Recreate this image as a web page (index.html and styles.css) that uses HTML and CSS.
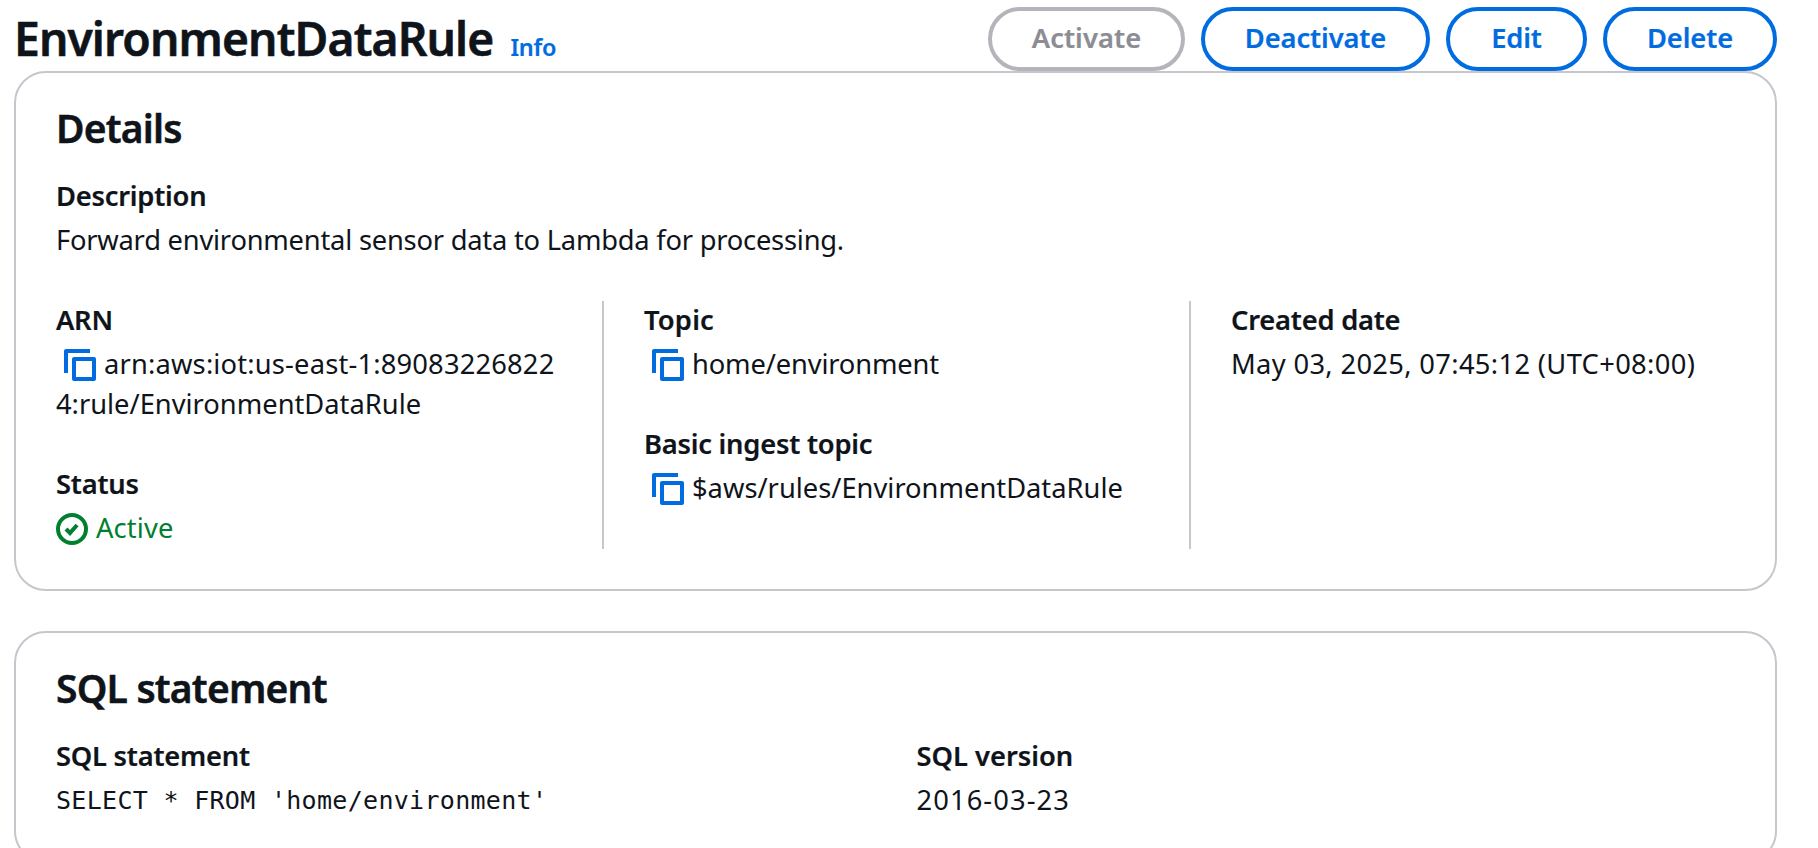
FILE: index.html
```html
<!DOCTYPE html>
<html lang="en">
<head>
<meta charset="utf-8">
<title>EnvironmentDataRule</title>
<link rel="stylesheet" href="styles.css">
</head>
<body>
<header class="page-header">
  <div class="heading">
    <h1 class="title">EnvironmentDataRule</h1>
    <a class="info">Info</a>
  </div>
  <div class="actions">
    <button class="btn btn-activate" disabled>Activate</button>
    <button class="btn btn-deactivate">Deactivate</button>
    <button class="btn btn-edit">Edit</button>
    <button class="btn btn-delete">Delete</button>
  </div>
</header>
<main class="content">
  <section class="card">
    <h2 class="card-title">Details</h2>
    <div class="field">
      <div class="label">Description</div>
      <div class="value">Forward environmental sensor data to Lambda for processing.</div>
    </div>
    <div class="columns">
      <div class="column">
        <div class="field">
          <div class="label">ARN</div>
          <div class="value arn"><svg class="icon copy" viewBox="0 0 16 16"><path d="M1 12V1h12"/><path d="M15 5H5v10h10V5Z"/></svg><span class="account">arn:aws:iot:us-east-1:89083226822</span><span class="resource">4:rule/EnvironmentDataRule</span></div>
        </div>
        <div class="field">
          <div class="label">Status</div>
          <div class="value status"><svg class="icon check" viewBox="0 0 16 16"><circle cx="8" cy="8" r="7"/><path d="m5 8 2 2 3.521-4"/></svg>Active</div>
        </div>
      </div>
      <div class="column">
        <div class="field">
          <div class="label topic-label">Topic</div>
          <div class="value topic"><svg class="icon copy" viewBox="0 0 16 16"><path d="M1 12V1h12"/><path d="M15 5H5v10h10V5Z"/></svg>home/environment</div>
        </div>
        <div class="field">
          <div class="label">Basic ingest topic</div>
          <div class="value ingest"><svg class="icon copy" viewBox="0 0 16 16"><path d="M1 12V1h12"/><path d="M15 5H5v10h10V5Z"/></svg>$aws/rules/EnvironmentDataRule</div>
        </div>
      </div>
      <div class="column">
        <div class="field">
          <div class="label">Created date</div>
          <div class="value date">May 03, 2025, 07:45:12 (UTC+08:00)</div>
        </div>
      </div>
    </div>
  </section>
  <section class="card">
    <h2 class="card-title">SQL statement</h2>
    <div class="halves">
      <div class="field">
        <div class="label">SQL statement</div>
        <div class="value code">SELECT * FROM 'home/environment'</div>
      </div>
      <div class="field version-field">
        <div class="label version-label">SQL version</div>
        <div class="value version">2016-03-23</div>
      </div>
    </div>
  </section>
</main>
</body>
</html>
```

FILE: styles.css
```css
* { box-sizing: border-box; }

body {
  margin: 0;
  height: 848px;
  overflow: hidden;
  padding: 7px 41px 0 14px;
  background: #fff;
  color: #0f141a;
  font-family: "Noto Sans", "Open Sans", sans-serif;
  font-size: 27.3px;
  line-height: 40px;
  letter-spacing: -0.22px;
}

.page-header {
  display: flex;
  justify-content: space-between;
  height: 64px;
}

.heading {
  display: flex;
  align-items: baseline;
  gap: 17px;
}

.title {
  margin: 0;
  font-size: 46.2px;
  font-weight: 600;
  line-height: 64px;
  letter-spacing: -0.88px;
  -webkit-text-stroke: 0.6px;
}

.info {
  color: #006ce0;
  font-size: 23.4px;
  font-weight: 600;
  -webkit-text-stroke: 0.2px;
}

.actions {
  display: flex;
  gap: 16px;
}

.btn {
  height: 64px;
  padding: 0 0 2px;
  border: 4px solid #006ce0;
  border-radius: 32px;
  background: #fff;
  color: #006ce0;
  font: 600 27.3px/40px "Noto Sans", "Open Sans", sans-serif;
  letter-spacing: -0.1px;
  -webkit-text-stroke: 0.2px;
}

.btn:disabled {
  border-color: #b4b4bb;
  color: #8c8c94;
}

.btn-activate { width: 197px; letter-spacing: 0.1px; }
.btn-deactivate { width: 229px; }
.btn-edit { width: 141px; }
.btn-delete { width: 174px; }

.content {
  display: flex;
  flex-direction: column;
  gap: 40px;
}

.card {
  flex: none;
  padding: 31px 40px 40px;
  border: 2px solid #c6c6cd;
  border-radius: 32px;
}

.card-title {
  margin: 0 0 24px;
  font-size: 39px;
  font-weight: 600;
  line-height: 48px;
  letter-spacing: -0.8px;
  -webkit-text-stroke: 0.5px;
}

.field {
  display: flex;
  flex-direction: column;
  gap: 4px;
}

.label {
  font-weight: 600;
  -webkit-text-stroke: 0.2px;
}

.columns {
  display: grid;
  grid-template-columns: 546px 587px 1fr;
  margin-top: 41px;
}

.column {
  display: flex;
  flex-direction: column;
  gap: 40px;
  height: 248px;
}

.column > .field:first-child { margin-top: -1px; }

.column + .column {
  padding-left: 40px;
  border-left: 2px solid #c6c6cd;
}

.arn {
  width: 506px;
  word-break: break-all;
}

.account { letter-spacing: 0.18px; }
.resource { letter-spacing: 0; }
.topic-label { letter-spacing: 0.2px; }
.topic { letter-spacing: -0.15px; }
.ingest { letter-spacing: 0; }
.date { letter-spacing: 0.34px; }
.version-label { letter-spacing: 0; }
.version { letter-spacing: 1.1px; }
.version-field { padding-left: 1px; }

.icon {
  width: 32px;
  height: 32px;
  fill: none;
  stroke-width: 2;
  vertical-align: -7px;
}

.copy {
  margin: 0 8px;
  stroke: #006ce0;
  stroke-linejoin: round;
}

.check {
  margin-right: 8px;
  stroke: #00802f;
}

.status {
  color: #00802f;
  letter-spacing: 0.15px;
}

.halves {
  display: grid;
  grid-template-columns: 1fr 1fr;
  gap: 40px;
}

.code {
  padding-top: 1px;
  font-family: "DejaVu Sans Mono", "Liberation Mono", monospace;
  font-size: 25px;
  letter-spacing: 0.3px;
}
```
